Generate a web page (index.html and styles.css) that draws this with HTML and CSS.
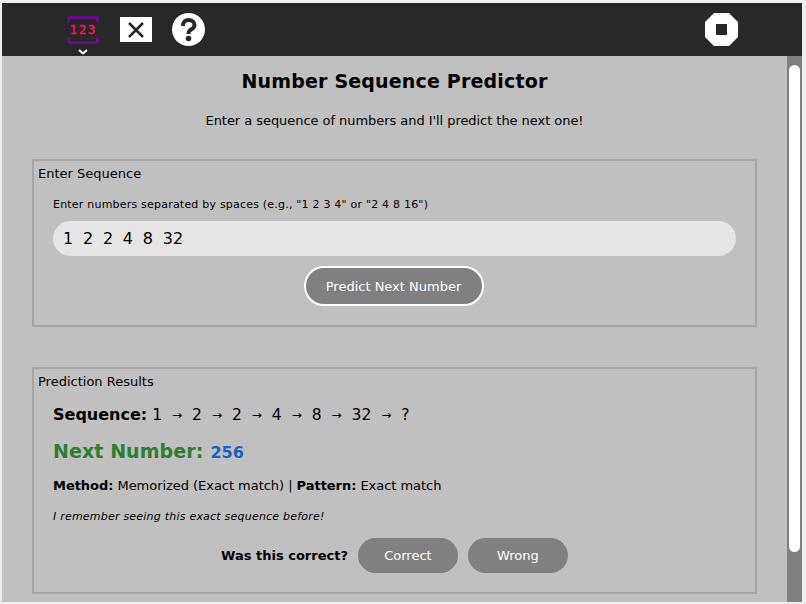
FILE: index.html
```html
<!DOCTYPE html>
<html lang="en">
  <head>
    <meta charset="UTF-8" />
    <title>Number Sequence Predictor</title>
    <link rel="stylesheet" href="styles.css">
  </head>
  <body>
    <div class="toolbar">
      <div class="activity">
        <svg class="activity-icon" width="32" height="28" viewBox="0 0 32 28">
          <path d="M1.500 6V3.500Q1.500 1.500 3.500 1.500H28.500Q30.500 1.500 30.500 3.500V6M1.500 22V24.500Q1.500 26.500 3.500 26.500H28.500Q30.500 26.500 30.500 24.500V22" fill="none" stroke="#6a0a94" stroke-width="3"/>
          <text x="16.500" y="18" text-anchor="middle" class="activity-num">123</text>
        </svg>
        <svg class="chevron" width="10" height="6" viewBox="0 0 10 6">
          <path d="M1 1L5 4.500L9 1" fill="none" stroke="#fff" stroke-width="2"/>
        </svg>
      </div>
      <div class="close-btn">
        <svg width="20" height="18" viewBox="0 0 20 18">
          <path d="M3 2L17 16M17 2L3 16" stroke="#282828" stroke-width="2.500"/>
        </svg>
      </div>
      <svg class="help-btn" width="33" height="33" viewBox="0 0 33 33">
        <circle cx="16.500" cy="16.500" r="16.500" fill="#fff"/>
        <path d="M11 13C11 9 13.500 7 16.500 7C20 7 22.500 9.200 22.500 12.200C22.500 15.200 19.500 16 17.500 17.800C16.700 18.500 16.500 19.500 16.500 21" fill="none" stroke="#282828" stroke-width="4"/>
        <circle cx="16.500" cy="25.500" r="2.800" fill="#282828"/>
      </svg>
      <div class="spacer"></div>
      <svg class="stop-btn" width="33" height="33" viewBox="0 0 33 33">
        <path fill-rule="evenodd" d="M9 0H24L33 9V24L24 33H9L0 24V9ZM11 11V22H22V11Z" fill="#fff"/>
      </svg>
    </div>

    <div class="main">
      <div class="content">
        <h1>Number Sequence Predictor</h1>
        <p class="intro">Enter a sequence of numbers and I'll predict the next one!</p>

        <fieldset class="box input-box">
          <div class="box-title">Enter Sequence</div>
          <div class="box-body">
            <label class="hint">Enter numbers separated by spaces (e.g., "1 2 3 4" or "2 4 8 16")</label>
            <input class="seq-input" type="text" value="1  2  2  4  8  32" />
            <div class="center">
              <button class="predict-btn">Predict Next Number</button>
            </div>
          </div>
        </fieldset>

        <fieldset class="box result-box">
          <div class="box-title">Prediction Results</div>
          <div class="box-body">
            <div class="sequence">
              <b>Sequence:</b>
              <span>1</span><span class="arrow">→</span>
              <span>2</span><span class="arrow">→</span>
              <span>2</span><span class="arrow">→</span>
              <span>4</span><span class="arrow">→</span>
              <span>8</span><span class="arrow">→</span>
              <span>32</span><span class="arrow">→</span>
              <span>?</span>
            </div>
            <p class="next"><b class="next-label">Next Number:</b> <span class="next-value">256</span></p>
            <p class="method"><b>Method:</b> Memorized (Exact match) | <b>Pattern:</b> Exact match</p>
            <p class="note">I remember seeing this exact sequence before!</p>
            <div class="feedback">
              <b>Was this correct?</b>
              <button class="fb-btn">Correct</button>
              <button class="fb-btn">Wrong</button>
            </div>
          </div>
        </fieldset>
      </div>
      <div class="scrollbar">
        <div class="thumb"></div>
      </div>
    </div>
  </body>
</html>
```

FILE: styles.css
```css
html,
body {
  height: 100%;
}
body {
  margin: 0;
  padding: 3px 4px 2px 2px;
  box-sizing: border-box;
  background-color: #efefef;
  font-family: "DejaVu Sans", sans-serif;
  color: #000;
  display: flex;
  flex-direction: column;
  overflow: hidden;
}

.toolbar {
  height: 53px;
  flex: none;
  background-color: #282828;
  display: flex;
  align-items: flex-start;
  padding: 10px 64px 0 65px;
  box-sizing: border-box;
}
.activity {
  width: 32px;
  margin-right: 21px;
  padding-top: 3px;
}
.activity-icon,
.chevron {
  display: block;
}
.chevron {
  margin: 5px auto 0;
}
.activity-num {
  font-family: "DejaVu Sans Mono", monospace;
  font-size: 12px;
  letter-spacing: 2px;
  fill: #ff1070;
  stroke: #ff1070;
  stroke-width: 0.4px;
}
.close-btn {
  width: 32px;
  height: 25px;
  margin-top: 4px;
  margin-right: 20px;
  background-color: #fff;
  display: flex;
  align-items: center;
  justify-content: center;
}
.close-btn svg {
  display: block;
}
.help-btn {
  display: block;
}
.spacer {
  flex: 1;
}
.stop-btn {
  display: block;
}

.main {
  flex: 1;
  min-height: 0;
  display: flex;
  background-color: #c0c0c0;
}
.content {
  flex: 1;
  min-width: 0;
  padding: 0 30px;
  overflow: hidden;
}
h1 {
  margin: 14px 0 0;
  font-size: 19px;
  line-height: 22px;
  letter-spacing: 0.18px;
  text-align: center;
}
.intro {
  margin: 21px 0 0;
  font-size: 13px;
  line-height: 16px;
  letter-spacing: -0.05px;
  text-align: center;
}

.box {
  margin: 0;
  padding: 0;
  border: 2px solid #a6a6a6;
  min-width: 0;
}
.input-box {
  margin-top: 30px;
  height: 168px;
  box-sizing: border-box;
}
.result-box {
  margin-top: 40px;
  height: 227px;
  box-sizing: border-box;
}
.box-title {
  font-size: 13px;
  line-height: 16px;
  padding: 5px 0 0 4px;
}
.box-body {
  padding: 0 19px;
}

.hint {
  display: block;
  margin-top: 16px;
  font-size: 11px;
  line-height: 14px;
  letter-spacing: 0.21px;
}
.seq-input {
  display: block;
  width: 100%;
  height: 35px;
  box-sizing: border-box;
  margin-top: 9px;
  padding: 0 10px;
  border: none;
  border-radius: 18px;
  background-color: #e5e5e5;
  font-family: inherit;
  font-size: 16px;
  word-spacing: -0.2px;
  color: #000;
  outline: none;
}
.center {
  display: flex;
  justify-content: center;
  margin-top: 10px;
  padding-right: 2px;
}
.predict-btn {
  width: 180px;
  height: 40px;
  border: 2px solid #fff;
  border-radius: 20px;
  background-color: #808080;
  color: #fff;
  font-family: inherit;
  font-size: 13px;
}

.next,
.method,
.note {
  margin: 0;
}
.sequence {
  margin-top: 16px;
  display: flex;
  align-items: center;
  gap: 10px;
  font-size: 15.500px;
  line-height: 18px;
}
.sequence b {
  font-size: 16px;
  margin-right: -5px;
}
.arrow {
  width: 10px;
  font-size: 12px;
  text-align: center;
}
.next {
  margin-top: 16px;
  font-size: 19px;
  line-height: 22px;
  color: #2e7d32;
}
.next-label {
  letter-spacing: 0.08px;
  margin-right: 1px;
}
.next-value {
  font-size: 16px;
  font-weight: bold;
  color: #1565c0;
}
.method {
  margin-top: 14px;
  font-size: 13px;
  line-height: 16px;
  letter-spacing: -0.04px;
}
.note {
  margin-top: 16px;
  font-size: 11px;
  line-height: 14px;
  letter-spacing: 0.22px;
  font-style: italic;
}
.feedback {
  display: flex;
  align-items: center;
  justify-content: center;
  gap: 10px;
  margin-top: 14px;
  font-size: 13px;
}
.fb-btn {
  width: 100px;
  height: 35px;
  border: none;
  border-radius: 18px;
  background-color: #808080;
  color: #fff;
  font-family: inherit;
  font-size: 13px;
}

.scrollbar {
  width: 15px;
  flex: none;
  box-sizing: border-box;
  padding: 9px 2px 0;
  background-color: #808080;
}
.thumb {
  height: 487px;
  border-radius: 6px;
  background-color: #fff;
}
```
